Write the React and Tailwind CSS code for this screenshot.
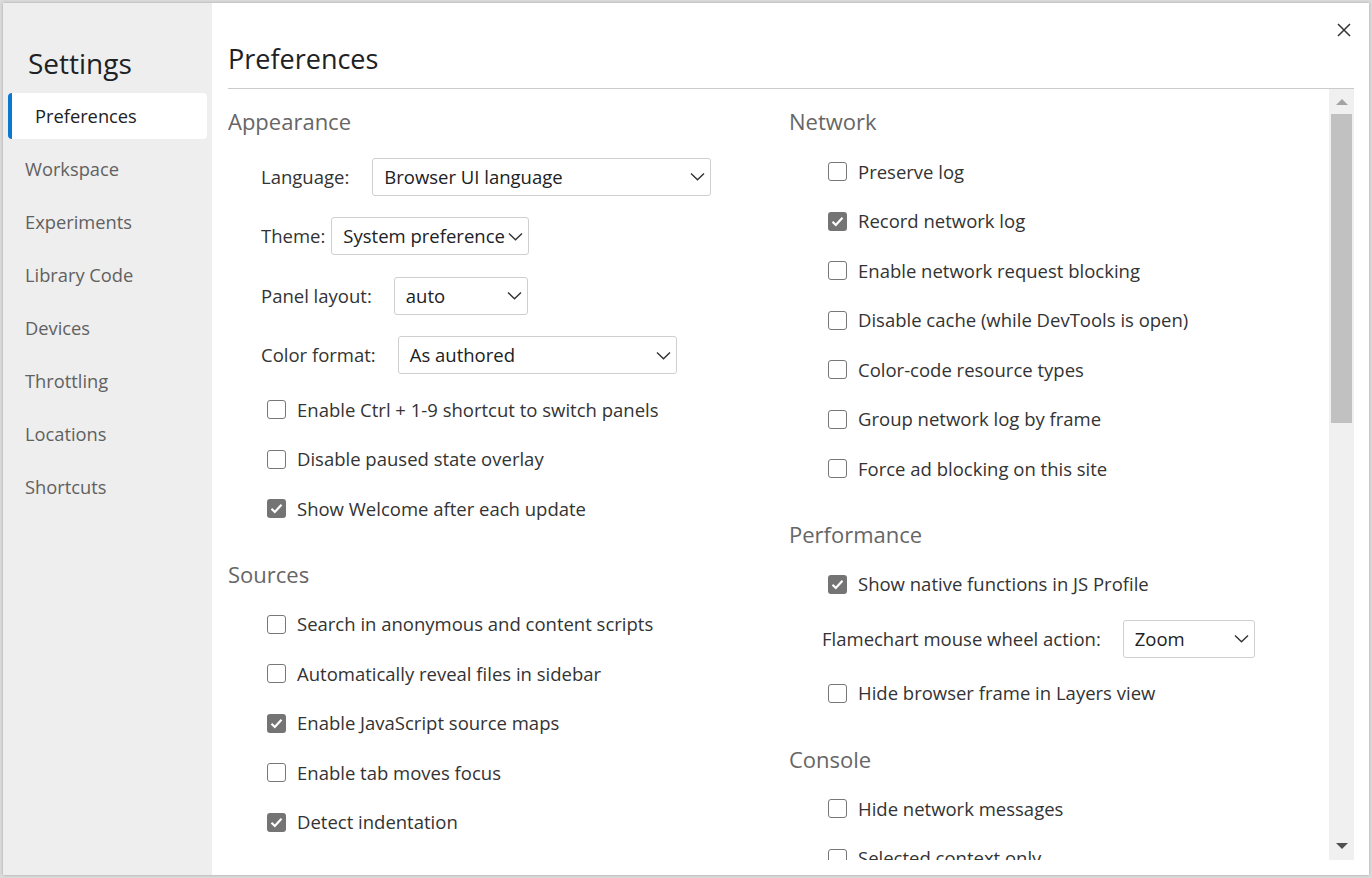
import React from 'react';

const font = { fontFamily: '"Open Sans", "Noto Sans", sans-serif' };

const navItems = ['Workspace', 'Experiments', 'Library Code', 'Devices', 'Throttling', 'Locations', 'Shortcuts'];

function Chevron() {
  return (
    <svg width="15" height="9" viewBox="0 0 15 9" className="shrink-0">
      <polyline points="1,1.5 7.5,7.8 14,1.5" fill="none" stroke="#333" strokeWidth="1.4" />
    </svg>
  );
}

function Select({ value, width }) {
  return (
    <div
      className="flex h-[38px] items-center justify-between rounded-[3px] border border-[#cfcfcf] bg-white pl-[11px] pr-[5px] text-[#202124]"
      style={{ width }}
    >
      <span className="whitespace-nowrap">{value}</span>
      <Chevron />
    </div>
  );
}

function SelectRow({ label, value, width, gap }) {
  return (
    <div className="flex h-[59.5px] items-center pl-[33px]">
      <span className="whitespace-nowrap text-[#333]" style={{ marginRight: gap }}>{label}</span>
      <Select value={value} width={width} />
    </div>
  );
}

function Check({ label, checked }) {
  return (
    <div className="flex h-[49.5px] items-center pl-[39px]">
      {checked ? (
        <div className="mr-[11px] flex h-[19px] w-[19px] items-center justify-center rounded-[3px] bg-[#747474]">
          <svg width="13" height="11" viewBox="0 0 13 11">
            <polyline points="1.5,5.8 4.8,9 11.5,1.8" fill="none" stroke="#fff" strokeWidth="2.2" />
          </svg>
        </div>
      ) : (
        <div className="mr-[11px] h-[19px] w-[19px] rounded-[3px] border-[1.5px] border-[#777]" />
      )}
      <span className="whitespace-nowrap text-[#333]">{label}</span>
    </div>
  );
}

function Header({ title, first }) {
  return (
    <div className={`flex h-[34px] items-center text-[22px] text-[#666] ${first ? 'mt-[15px]' : 'mt-[24px]'}`}>
      {title}
    </div>
  );
}

export default function App() {
  return (
    <div className="h-[878px] w-[1372px] overflow-hidden bg-[#dcdcdc] p-[3px] text-[18.5px]" style={font}>
      <div className="flex h-[872px] w-[1366px] bg-white shadow-[0_0_3px_rgba(0,0,0,0.25)]">
        {/* sidebar */}
        <div className="flex w-[209px] shrink-0 flex-col bg-[#eeeeee] px-[5px]">
          <div className="flex h-[90px] items-center pl-[20px] pt-[29px] text-[28px] text-[#202124]">Settings</div>
          <div className="flex flex-col gap-[7px] text-[18.3px]">
            <div className="flex h-[46px] items-center rounded-[4px] bg-white">
              <div className="h-full w-[4px] rounded-l-[4px] bg-[#0b78d0]" />
              <span className="pl-[23px] text-[#202124]">Preferences</span>
            </div>
            {navItems.map((n) => (
              <div key={n} className="flex h-[46px] items-center pl-[17px] text-[#616161]">{n}</div>
            ))}
          </div>
        </div>

        {/* main */}
        <div className="flex min-w-0 flex-1 flex-col pl-[16px] pr-[15px]">
          <div className="flex h-[86px] items-start justify-between border-b border-[#cbcbcb]">
            <span className="mt-[38px] text-[27px] leading-[36px] text-[#202124]">Preferences</span>
            <svg width="16" height="16" viewBox="0 0 16 16" className="mr-[2px] mt-[19px]">
              <path d="M2 2 L14 14 M14 2 L2 14" stroke="#333" strokeWidth="1.5" />
            </svg>
          </div>

          <div className="flex h-[771px] overflow-hidden">
            <div className="w-[561px] shrink-0">
              <Header title="Appearance" first />
              <div className="mt-[9px]">
                <SelectRow label="Language:" value="Browser UI language" width={339} gap={23} />
                <SelectRow label="Theme:" value="System preference" width={198} gap={6} />
                <SelectRow label="Panel layout:" value="auto" width={134} gap={22} />
                <SelectRow label="Color format:" value="As authored" width={279} gap={22} />
                <Check label="Enable Ctrl + 1-9 shortcut to switch panels" />
                <Check label="Disable paused state overlay" />
                <Check label="Show Welcome after each update" checked />
              </div>
              <Header title="Sources" />
              <div className="mt-[8px]">
                <Check label="Search in anonymous and content scripts" />
                <Check label="Automatically reveal files in sidebar" />
                <Check label="Enable JavaScript source maps" checked />
                <Check label="Enable tab moves focus" />
                <Check label="Detect indentation" checked />
              </div>
            </div>

            <div className="min-w-0 flex-1">
              <Header title="Network" first />
              <div className="mt-[9px]">
                <Check label="Preserve log" />
                <Check label="Record network log" checked />
                <Check label="Enable network request blocking" />
                <Check label="Disable cache (while DevTools is open)" />
                <Check label="Color-code resource types" />
                <Check label="Group network log by frame" />
                <Check label="Force ad blocking on this site" />
              </div>
              <Header title="Performance" />
              <div className="mt-[8px]">
                <Check label="Show native functions in JS Profile" checked />
                <SelectRow label="Flamechart mouse wheel action:" value="Zoom" width={132} gap={22} />
                <Check label="Hide browser frame in Layers view" />
              </div>
              <div className="mt-[3px]">
                <Header title="Console" />
              </div>
              <div className="mt-[8px]">
                <Check label="Hide network messages" />
                <Check label="Selected context only" />
              </div>
            </div>

            {/* scrollbar */}
            <div className="flex w-[25px] shrink-0 flex-col items-center bg-[#f0f0f0]">
              <div className="flex h-[25px] items-center justify-center">
                <div className="h-0 w-0 border-x-[6px] border-b-[6px] border-x-transparent border-b-[#a3a3a3]" />
              </div>
              <div className="h-[309px] w-[21px] bg-[#c1c1c1]" />
              <div className="flex-1" />
              <div className="flex h-[28px] items-center justify-center">
                <div className="h-0 w-0 border-x-[6px] border-t-[6px] border-x-transparent border-t-[#505050]" />
              </div>
            </div>
          </div>
        </div>
      </div>
    </div>
  );
}
